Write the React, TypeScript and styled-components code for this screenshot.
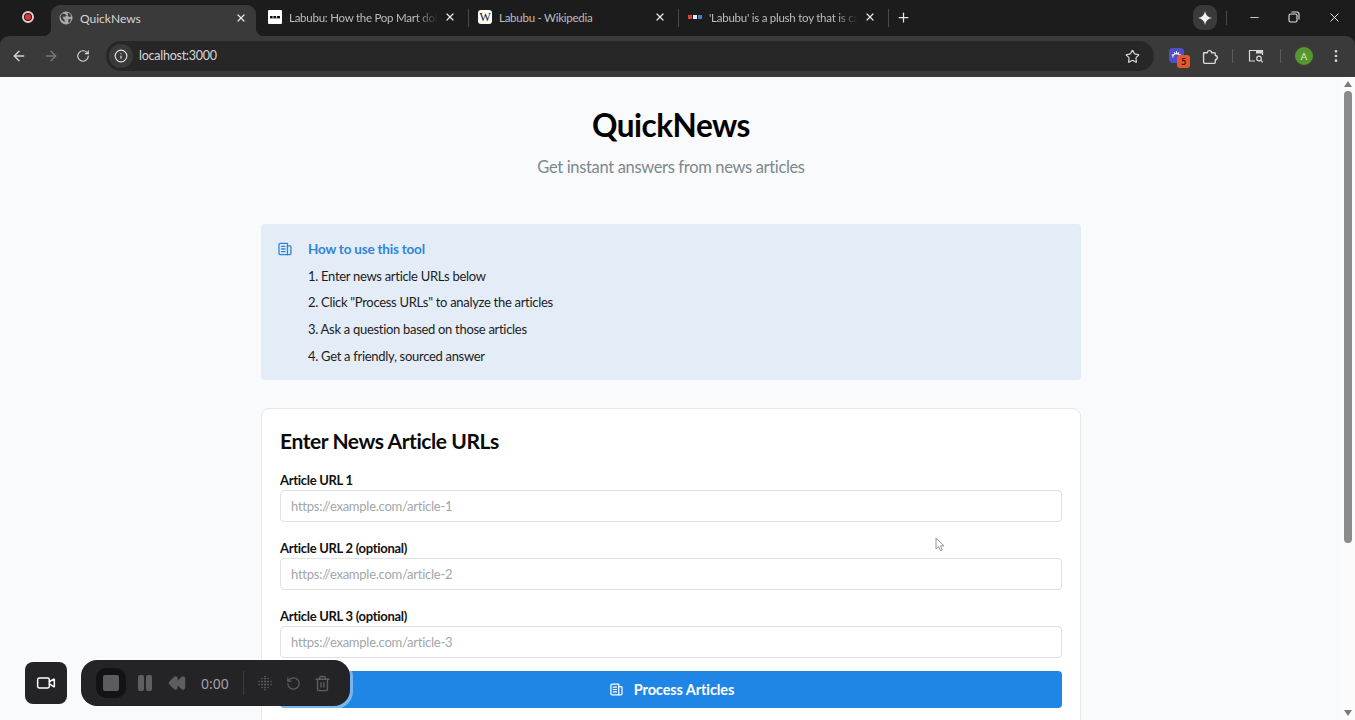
import React from "react";
import styled, { createGlobalStyle } from "styled-components";
import { ArrowLeft, ArrowRight, RotateCw, Info, Star, Plus, X, Minus, MoreVertical, Video, Rewind, RotateCcw, Trash2 } from "lucide-react";

const Global = createGlobalStyle`
  html, body { margin: 0; padding: 0; height: 100%; overflow: hidden; }
  body { font-family: Lato, "Noto Sans", sans-serif; background: #1c1c1d; }
  * { box-sizing: border-box; }
`;

const Shell = styled.div`
  position: relative;
  width: 1355px;
  height: 720px;
  display: flex;
  flex-direction: column;
  overflow: hidden;
  background: #1c1c1d;
`;
const TabStrip = styled.div`
  height: 36px;
  background: #1c1c1d;
  display: flex;
  align-items: flex-end;
  flex: none;
  color: #c9c9c9;
`;
const RecordSlot = styled.div`
  width: 51px;
  height: 36px;
  padding-left: 5px;
  padding-bottom: 2px;
  display: flex;
  align-items: center;
  justify-content: center;
`;
const RecordDot = styled.span`
  width: 12px;
  height: 12px;
  border-radius: 50%;
  border: 2px solid #f2c9c9;
  display: flex;
  align-items: center;
  justify-content: center;
  &::after { content: ""; width: 6px; height: 6px; border-radius: 50%; background: #d8383a; }
`;
const Tab = styled.div<{ $active?: boolean }>`
  position: relative;
  width: ${(p) => (p.$active ? "205px" : "207px")};
  height: ${(p) => (p.$active ? "31px" : "36px")};
  margin-right: ${(p) => (p.$active ? "4px" : "0")};
  padding: ${(p) => (p.$active ? "0 7px 0 8px" : "0 9px 0 8px")};
  display: flex;
  align-items: center;
  background: ${(p) => (p.$active ? "#3a3a3b" : "transparent")};
  border-radius: 9px 9px 0 0;
  color: ${(p) => (p.$active ? "#d6d6d6" : "#bdbdbd")};
  font-size: ${(p) => (p.$active ? "12px" : "11.5px")};
  letter-spacing: ${(p) => (p.$active ? "0" : "-0.25px")};
  ${(p) =>
    p.$active
      ? `
    &::before, &::after { content: ""; position: absolute; bottom: 0; width: 8px; height: 8px; }
    &::before { left: -8px; background: radial-gradient(circle at 0 0, transparent 8px, #3a3a3b 8.5px); }
    &::after { right: -8px; background: radial-gradient(circle at 100% 0, transparent 8px, #3a3a3b 8.5px); }
    padding-bottom: 5px;
  `
      : "padding-bottom: 2px;"}
`;
const Favicon = styled.span`
  width: 14px;
  height: 14px;
  flex: none;
  display: flex;
  align-items: center;
  justify-content: center;
  margin-right: 7px;
`;
const WikiMark = styled(Favicon)`
  background: #fff;
  border-radius: 3px;
  color: #111;
  font-family: "Liberation Serif", serif;
  font-size: 12px;
  line-height: 14px;
`;
const TabTitle = styled.span<{ $fade?: boolean }>`
  flex: 1;
  min-width: 0;
  white-space: nowrap;
  overflow: hidden;
  ${(p) => (p.$fade ? "mask-image: linear-gradient(to right, #000 85%, transparent 100%);" : "")}
`;
const TabClose = styled.span`
  width: 16px;
  flex: none;
  margin-left: 4px;
  display: flex;
  justify-content: center;
  color: #e6e6e6;
`;
const TabSep = styled.span`
  width: 1px;
  height: 18px;
  background: #4a4a4b;
  margin: 0 1px 9px;
  flex: none;
`;
const NewTab = styled.span`
  width: 26px;
  height: 36px;
  padding-bottom: 2px;
  display: flex;
  align-items: center;
  justify-content: center;
  color: #e6e6e6;
`;
const StripSpacer = styled.div`
  flex: 1;
`;
const GeminiButton = styled.span`
  width: 24px;
  height: 25px;
  margin-bottom: 6px;
  border-radius: 9px;
  background: #3a3a3b;
  display: flex;
  align-items: center;
  justify-content: center;
`;
const StripSep = styled.span`
  width: 1px;
  height: 14px;
  background: #4a4a4b;
  margin: 0 7px 11px 9px;
`;
const WindowButton = styled.span`
  width: 40px;
  height: 36px;
  display: flex;
  align-items: center;
  justify-content: center;
  padding-bottom: 2px;
  color: #e4e4e4;
`;
const WindowControls = styled.div`
  display: flex;
  margin-right: 1px;
`;

const Toolbar = styled.div`
  height: 41px;
  background: #3a3a3b;
  border-radius: 9px 9px 0 0;
  padding: 0 3px 1px 3px;
  display: flex;
  align-items: center;
  flex: none;
`;
const NavButton = styled.span<{ $dim?: boolean }>`
  width: 32px;
  height: 32px;
  flex: none;
  display: flex;
  align-items: center;
  justify-content: center;
  color: ${(p) => (p.$dim ? "#7a7a7a" : "#d8d8d8")};
`;
const UrlBar = styled.div`
  width: 1048px;
  height: 30px;
  margin-left: 7px;
  border-radius: 15px;
  background: #272728;
  display: flex;
  align-items: center;
  padding: 0 14px 0 3px;
  flex: none;
`;
const SiteInfo = styled.span`
  width: 24px;
  height: 24px;
  border-radius: 50%;
  background: #3a3a3b;
  display: flex;
  align-items: center;
  justify-content: center;
  color: #e0e0e0;
  margin-right: 6px;
`;
const UrlText = styled.span`
  flex: 1;
  color: #d8d8d8;
  font-size: 12.5px;
  letter-spacing: -0.25px;
  padding-bottom: 1px;
`;
const StarSlot = styled.span`
  color: #e0e0e0;
  display: flex;
`;
const ExtSlot = styled.span`
  position: relative;
  width: 32px;
  height: 32px;
  flex: none;
  display: flex;
  align-items: center;
  justify-content: center;
  color: #d8d8d8;
`;
const ExtSlotFirst = styled(ExtSlot)`
  margin-left: 8px;
  padding: 0 3px 2px 0;
`;
const ExtBadge = styled.span`
  position: absolute;
  left: 15px;
  top: 15px;
  width: 13px;
  height: 13px;
  border-radius: 3px;
  background: #e8552e;
  color: #2a1510;
  font-size: 9px;
  font-weight: 700;
  line-height: 13px;
  text-align: center;
`;
const ToolSep = styled.span<{ $l: number; $r: number }>`
  width: 1px;
  height: 14px;
  background: #5a5a5a;
  margin: 0 ${(p) => p.$r}px 0 ${(p) => p.$l}px;
  flex: none;
`;
const Avatar = styled.span`
  width: 18px;
  height: 18px;
  border-radius: 50%;
  background: #57962f;
  color: #d7e8c8;
  font-size: 10px;
  line-height: 18px;
  text-align: center;
`;

const Viewport = styled.div`
  flex: 1;
  min-height: 0;
  display: flex;
  background: #f9fafb;
  overflow: hidden;
`;
const Page = styled.main`
  flex: 1;
  min-width: 0;
  padding-top: 26px;
  display: flex;
  flex-direction: column;
  align-items: center;
`;
const Scrollbar = styled.div`
  width: 13px;
  flex: none;
  padding: 4px 3px 4px 2px;
  display: flex;
  flex-direction: column;
  align-items: center;
  color: #7c7c7e;
  background: #fbfbfc;
`;
const ScrollArrow = styled.svg`
  width: 8px;
  height: 6px;
  flex: none;
`;
const ScrollThumb = styled.div`
  width: 8px;
  height: 452px;
  border-radius: 4px;
  margin-top: 4px;
  background: #8b8b8d;
`;
const ScrollFill = styled.div`
  flex: 1;
`;

const Title = styled.h1`
  margin: 0;
  font-size: 31.5px;
  letter-spacing: -0.5px;
  line-height: 44px;
  font-weight: 700;
  color: #000;
`;
const Subtitle = styled.p`
  margin: 8px 0 45px;
  font-size: 16.5px;
  letter-spacing: -0.34px;
  line-height: 24px;
  color: #7c8790;
`;
const Column = styled.div`
  width: 820px;
  display: flex;
  flex-direction: column;
`;
const InfoBox = styled.section`
  background: #e4ecf8;
  border-radius: 4px;
  padding: 12px 16px 11px;
  display: grid;
  grid-template-columns: 16px 1fr;
  column-gap: 15px;
  height: 156px;
  margin-bottom: 28px;
`;
const InfoIcon = styled.span`
  color: #2f85d8;
  display: flex;
  align-items: center;
  height: 26px;
  padding-left: 1px;
`;
const InfoBody = styled.div`
  display: flex;
  flex-direction: column;
`;
const InfoHeading = styled.h2`
  margin: 0;
  font-size: 13.5px;
  letter-spacing: -0.2px;
  line-height: 26.7px;
  font-weight: 700;
  color: #2f85d8;
`;
const InfoStep = styled.div`
  font-size: 13px;
  letter-spacing: -0.3px;
  line-height: 26.7px;
  color: #1c1c1c;
`;
const Card = styled.section`
  background: #fff;
  border: 1px solid #e6e7e9;
  border-radius: 8px;
  padding: 17px 18px 24px;
  display: flex;
  flex-direction: column;
`;
const CardTitle = styled.h2`
  margin: 0 0 14px;
  font-size: 21px;
  letter-spacing: -0.43px;
  line-height: 30px;
  font-weight: 700;
  color: #0a0a0a;
`;
const Field = styled.label`
  display: flex;
  flex-direction: column;
  margin-bottom: 16px;
  &:nth-of-type(3) { margin-bottom: 13px; }
`;
const FieldLabel = styled.span`
  font-size: 13px;
  letter-spacing: -0.3px;
  line-height: 20px;
  font-weight: 700;
  color: #111;
`;
const UrlInput = styled.input`
  height: 32px;
  border: 1px solid #dfe1e4;
  border-radius: 4px;
  padding: 0 10px 1px;
  font: 13px Lato, sans-serif;
  letter-spacing: -0.25px;
  background: #fff;
  &::placeholder { color: #a3a6a9; opacity: 1; }
`;
const ProcessButton = styled.button`
  height: 37px;
  border: 0;
  border-radius: 4px;
  background: #1f86e5;
  color: #fff;
  font: 700 14.5px Lato, sans-serif;
  letter-spacing: -0.1px;
  display: flex;
  align-items: center;
  justify-content: center;
  gap: 11px;
  padding-right: 4px;
`;

const CursorMark = styled.svg`
  position: absolute;
  left: 935px;
  top: 537px;
  width: 10px;
  height: 15px;
`;
const CameraButton = styled.div`
  position: absolute;
  left: 25px;
  top: 662px;
  width: 42px;
  height: 42px;
  border-radius: 8px;
  background: #242427;
  color: #fff;
  display: flex;
  align-items: center;
  justify-content: center;
`;
const Recorder = styled.div`
  position: absolute;
  left: 81px;
  top: 660px;
  width: 269px;
  height: 46px;
  border-radius: 16px;
  background: #242427;
  box-shadow: 1px 1px 0 2px rgba(255, 255, 255, 0.4);
  display: flex;
  align-items: center;
  padding-left: 15px;
  color: #5e5e62;
`;
const StopWell = styled.span`
  width: 30px;
  height: 30px;
  border-radius: 10px;
  background: #131315;
  display: flex;
  align-items: center;
  justify-content: center;
  flex: none;
  &::after { content: ""; width: 16px; height: 16px; border-radius: 2px; background: #5c5c60; }
`;
const RecSlot = styled.span<{ $w: number; $ml?: number }>`
  width: ${(p) => p.$w}px;
  margin-left: ${(p) => p.$ml ?? 0}px;
  flex: none;
  display: flex;
  justify-content: center;
`;
const PauseBars = styled.span`
  width: 14px;
  height: 16px;
  margin-left: 12px;
  flex: none;
  display: flex;
  justify-content: space-between;
  &::before, &::after { content: ""; width: 6px; height: 16px; border-radius: 2px; background: #5e5e62; }
`;
const Timer = styled.span`
  margin-left: 14px;
  width: 30px;
  font: 14px "Noto Sans", sans-serif;
  color: #a2a2a6;
  white-space: nowrap;
`;
const RecDivider = styled.span`
  width: 1px;
  height: 24px;
  background: #3d3d41;
  margin: 0 11px 0 12px;
  flex: none;
`;

const PaperIcon = ({ size = 14 }: { size?: number }) => (
  <svg width={size} height={size} viewBox="0 0 16 16" fill="none" stroke="currentColor" strokeWidth="1.5" strokeLinecap="round" strokeLinejoin="round">
    <path d="M2.7 1.5h8.1v13H2.7a1.6 1.6 0 0 1-1.6-1.6V3.1a1.6 1.6 0 0 1 1.6-1.6z" />
    <path d="M10.8 4.5h3a1 1 0 0 1 1 1v7.4a1.6 1.6 0 0 1-1.6 1.6h-2.4" />
    <path d="M4 5h4M4 8h4M4 11h4" />
  </svg>
);
const GlobeIcon = () => (
  <svg width="14" height="14" viewBox="0 0 14 14">
    <circle cx="7" cy="7" r="6.5" fill="#a9a9a9" />
    <path d="M3 2.5l3 .4 1.6 1.4-1.2 1.5-2-.2-.6 1.6 1.8 1.5v2.5L2.5 8.6 1.4 6zM9 1.8l2.2 1.3 1 2.4-2.2.5-1.3-1.5zM9.5 8l2.6.2-1 2.7-1.8 1.2z" fill="#3a3a3b" />
  </svg>
);
const DotsFavicon = () => (
  <svg width="14" height="14" viewBox="0 0 14 14">
    <rect width="14" height="14" rx="1" fill="#fff" />
    <rect x="2" y="6" width="10" height="2.4" fill="#111" />
    <path d="M5 6v2.4M8.5 6v2.4" stroke="#fff" strokeWidth=".8" />
  </svg>
);
const NprFavicon = () => (
  <svg width="14" height="14" viewBox="0 0 14 14">
    <rect x="0" y="5" width="4" height="4" fill="#d8433a" />
    <rect x="5" y="5" width="4" height="4" fill="#e8e8e8" />
    <rect x="10" y="5" width="4" height="4" fill="#3f7fd0" />
  </svg>
);
const Spark = () => (
  <svg width="14" height="14" viewBox="0 0 14 14">
    <path d="M7 0c.6 3.9 2.9 6.3 7 7-4.1.7-6.4 3.1-7 7-.6-3.9-2.9-6.3-7-7 4.1-.7 6.4-3.1 7-7z" fill="#f2f2f2" />
  </svg>
);
const RestoreIcon = () => (
  <svg width="12" height="12" viewBox="0 0 12 12" fill="none" stroke="currentColor" strokeWidth="1.1">
    <rect x="1" y="3" width="8" height="8" rx="1.6" />
    <path d="M3.5 1h5.6A1.9 1.9 0 0 1 11 2.900v5.600" />
  </svg>
);
const ExtensionLogo = () => (
  <svg width="15" height="15" viewBox="0 0 16 16">
    <rect width="16" height="16" rx="4" fill="#4f50c8" />
    <path d="M4 10a4 4 0 0 1 8 0M3 7l2 1.3M5.5 4.5l1 2M8 3.5V6M10.5 4.500l-1 2M13 7l-2 1.300" stroke="#fff" strokeWidth="1.1" fill="none" />
  </svg>
);
const PuzzleIcon = () => (
  <svg width="17" height="17" viewBox="1 0 16 16" fill="none" stroke="currentColor" strokeWidth="1.3" strokeLinejoin="round">
    <path d="M2.5 4.5H6a2 2 0 0 1 4 0h2.500a1 1 0 0 1 1 1V7a2 2 0 0 1 0 4v2.500a1 1 0 0 1-1 1h-9a1 1 0 0 1-1-1z" />
  </svg>
);
const MediaIcon = () => (
  <svg width="16" height="16" viewBox="0 0 16 16" fill="none" stroke="currentColor" strokeWidth="1.2">
    <path d="M7 13H1.500V2.500h13V7" />
    <rect x="8" y="2.500" width="6.500" height="3" fill="currentColor" stroke="none" />
    <circle cx="11" cy="10.500" r="2.300" />
    <path d="M12.800 12.300l2 2" />
  </svg>
);
const dotRows: [number, number, number][] = [
  [8, 1.5, 0.8], [5, 3.5, 0.8], [8, 3.5, 0.9], [11, 3.5, 0.8],
  [2, 6.5, 0.8], [5, 6.5, 1], [8, 6.5, 1.1], [11, 6.5, 1], [14, 6.5, 0.8],
  [2, 9.5, 0.8], [5, 9.5, 1], [8, 9.5, 1.1], [11, 9.5, 1], [14, 9.5, 0.8],
  [5, 12.5, 0.8], [8, 12.5, 0.9], [11, 12.5, 0.8], [8, 14.8, 0.8],
];
const GridDots = () => (
  <svg width="16" height="16" viewBox="0 0 16 16" fill="currentColor">
    {dotRows.map(([x, y, r], i) => (
      <circle key={i} cx={x} cy={y} r={r} />
    ))}
  </svg>
);

export default function App() {
  return (
    <Shell>
      <Global />
      <TabStrip>
        <RecordSlot><RecordDot /></RecordSlot>
        <Tab $active>
          <Favicon><GlobeIcon /></Favicon>
          <TabTitle>QuickNews</TabTitle>
          <TabClose><X size={12} strokeWidth={2.4} /></TabClose>
        </Tab>
        <Tab>
          <Favicon><DotsFavicon /></Favicon>
          <TabTitle $fade>Labubu: How the Pop Mart doll became a craze</TabTitle>
          <TabClose><X size={12} strokeWidth={2.4} /></TabClose>
        </Tab>
        <TabSep />
        <Tab>
          <WikiMark>W</WikiMark>
          <TabTitle>Labubu - Wikipedia</TabTitle>
          <TabClose><X size={12} strokeWidth={2.4} /></TabClose>
        </Tab>
        <TabSep />
        <Tab>
          <Favicon><NprFavicon /></Favicon>
          <TabTitle $fade>'Labubu' is a plush toy that is causing a craze</TabTitle>
          <TabClose><X size={12} strokeWidth={2.4} /></TabClose>
        </Tab>
        <TabSep />
        <NewTab><Plus size={15} strokeWidth={2} /></NewTab>
        <StripSpacer />
        <GeminiButton><Spark /></GeminiButton>
        <StripSep />
        <WindowControls>
          <WindowButton><Minus size={13} strokeWidth={1.6} /></WindowButton>
          <WindowButton><RestoreIcon /></WindowButton>
          <WindowButton><X size={15} strokeWidth={1.6} /></WindowButton>
        </WindowControls>
      </TabStrip>
      <Toolbar>
        <NavButton><ArrowLeft size={16} /></NavButton>
        <NavButton $dim><ArrowRight size={16} /></NavButton>
        <NavButton><RotateCw size={14} /></NavButton>
        <UrlBar>
          <SiteInfo><Info size={14} /></SiteInfo>
          <UrlText>localhost:3000</UrlText>
          <StarSlot><Star size={15} strokeWidth={1.8} /></StarSlot>
        </UrlBar>
        <ExtSlotFirst><ExtensionLogo /><ExtBadge>5</ExtBadge></ExtSlotFirst>
        <ExtSlot><PuzzleIcon /></ExtSlot>
        <ToolSep $l={6} $r={7} />
        <ExtSlot><MediaIcon /></ExtSlot>
        <ToolSep $l={8} $r={7} />
        <ExtSlot><Avatar>A</Avatar></ExtSlot>
        <ExtSlot><MoreVertical size={16} /></ExtSlot>
      </Toolbar>
      <Viewport>
        <Page>
          <Title>QuickNews</Title>
          <Subtitle>Get instant answers from news articles</Subtitle>
          <Column>
            <InfoBox>
              <InfoIcon><PaperIcon size={14} /></InfoIcon>
              <InfoBody>
                <InfoHeading>How to use this tool</InfoHeading>
                <InfoStep>1. Enter news article URLs below</InfoStep>
                <InfoStep>2. Click "Process URLs" to analyze the articles</InfoStep>
                <InfoStep>3. Ask a question based on those articles</InfoStep>
                <InfoStep>4. Get a friendly, sourced answer</InfoStep>
              </InfoBody>
            </InfoBox>
            <Card>
              <CardTitle>Enter News Article URLs</CardTitle>
              <Field>
                <FieldLabel>Article URL 1</FieldLabel>
                <UrlInput placeholder="https://example.com/article-1" />
              </Field>
              <Field>
                <FieldLabel>Article URL 2 (optional)</FieldLabel>
                <UrlInput placeholder="https://example.com/article-2" />
              </Field>
              <Field>
                <FieldLabel>Article URL 3 (optional)</FieldLabel>
                <UrlInput placeholder="https://example.com/article-3" />
              </Field>
              <ProcessButton><PaperIcon size={13} />Process Articles</ProcessButton>
            </Card>
          </Column>
        </Page>
        <Scrollbar>
          <ScrollArrow viewBox="0 0 8 6"><path d="M4 0l4 6H0z" fill="currentColor" /></ScrollArrow>
          <ScrollThumb />
          <ScrollFill />
          <ScrollArrow viewBox="0 0 8 6"><path d="M4 6L0 0h8z" fill="currentColor" /></ScrollArrow>
        </Scrollbar>
      </Viewport>
      <CursorMark viewBox="0 0 10 15"><path d="M1 1v11l2.7-2.4 1.8 4 1.8-.8-1.8-3.9H9z" fill="#fff" stroke="#8a8a8a" strokeWidth=".9" /></CursorMark>
      <CameraButton><Video size={20} strokeWidth={1.8} /></CameraButton>
      <Recorder>
        <StopWell />
        <PauseBars />
        <RecSlot $w={20} $ml={15}><Rewind size={18} fill="currentColor" /></RecSlot>
        <Timer>0:00</Timer>
        <RecDivider />
        <RecSlot $w={20}><GridDots /></RecSlot>
        <RecSlot $w={16} $ml={10}><RotateCcw size={15} /></RecSlot>
        <RecSlot $w={18} $ml={12}><Trash2 size={17} /></RecSlot>
      </Recorder>
    </Shell>
  );
}
